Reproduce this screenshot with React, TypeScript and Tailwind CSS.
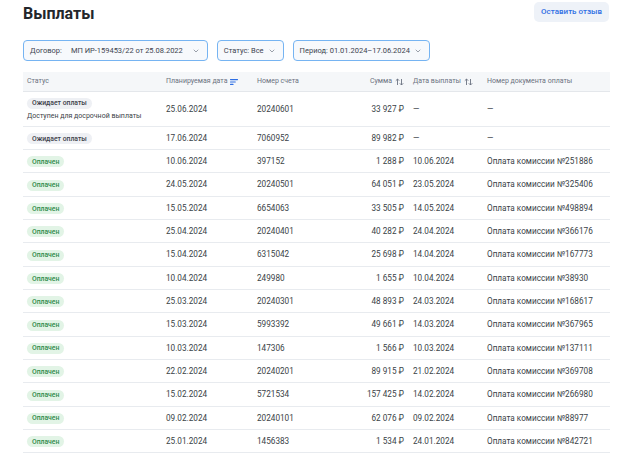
import { ChevronDown } from "lucide-react";

type Row = {
  status: "wait" | "paid";
  early?: boolean;
  plan: string;
  account: string;
  sum: string;
  paid: string;
  doc: string;
};

const rows: Row[] = [
  { status: "wait", early: true, plan: "25.06.2024", account: "20240601", sum: "33 927 ₽", paid: "—", doc: "—" },
  { status: "wait", plan: "17.06.2024", account: "7060952", sum: "89 982 ₽", paid: "—", doc: "—" },
  { status: "paid", plan: "10.06.2024", account: "397152", sum: "1 288 ₽", paid: "10.06.2024", doc: "Оплата комиссии №251886" },
  { status: "paid", plan: "24.05.2024", account: "20240501", sum: "64 051 ₽", paid: "23.05.2024", doc: "Оплата комиссии №325406" },
  { status: "paid", plan: "15.05.2024", account: "6654063", sum: "33 505 ₽", paid: "14.05.2024", doc: "Оплата комиссии №498894" },
  { status: "paid", plan: "25.04.2024", account: "20240401", sum: "40 282 ₽", paid: "24.04.2024", doc: "Оплата комиссии №366176" },
  { status: "paid", plan: "15.04.2024", account: "6315042", sum: "25 698 ₽", paid: "14.04.2024", doc: "Оплата комиссии №167773" },
  { status: "paid", plan: "10.04.2024", account: "249980", sum: "1 655 ₽", paid: "10.04.2024", doc: "Оплата комиссии №38930" },
  { status: "paid", plan: "25.03.2024", account: "20240301", sum: "48 893 ₽", paid: "24.03.2024", doc: "Оплата комиссии №168617" },
  { status: "paid", plan: "15.03.2024", account: "5993392", sum: "49 661 ₽", paid: "14.03.2024", doc: "Оплата комиссии №367965" },
  { status: "paid", plan: "10.03.2024", account: "147306", sum: "1 566 ₽", paid: "10.03.2024", doc: "Оплата комиссии №137111" },
  { status: "paid", plan: "22.02.2024", account: "20240201", sum: "89 915 ₽", paid: "21.02.2024", doc: "Оплата комиссии №369708" },
  { status: "paid", plan: "15.02.2024", account: "5721534", sum: "157 425 ₽", paid: "14.02.2024", doc: "Оплата комиссии №266980" },
  { status: "paid", plan: "09.02.2024", account: "20240101", sum: "62 076 ₽", paid: "09.02.2024", doc: "Оплата комиссии №88977" },
  { status: "paid", plan: "25.01.2024", account: "1456383", sum: "1 534 ₽", paid: "24.01.2024", doc: "Оплата комиссии №842721" },
];

const cols = "grid grid-cols-[139px_91px_87px_68px_75px_1fr] items-center";

function SortArrows() {
  return (
    <svg width="9" height="8" viewBox="0 0 9 8" className="ml-[3px] inline-block">
      <path d="M2.5 7V1M0.8 2.7L2.5 1L4.2 2.7" stroke="#6b7280" strokeWidth="0.9" fill="none" />
      <path d="M6.5 1V7M4.8 5.3L6.5 7L8.2 5.3" stroke="#6b7280" strokeWidth="0.9" fill="none" />
    </svg>
  );
}

function SortActive() {
  return (
    <svg width="8" height="8" viewBox="0 0 9 8" className="ml-[3px] inline-block">
      <rect x="0" y="0.5" width="9" height="1.4" rx="0.5" fill="#2f6fe4" />
      <rect x="0" y="3.3" width="6.5" height="1.4" rx="0.5" fill="#2f6fe4" />
      <rect x="0" y="6.1" width="4" height="1.4" rx="0.5" fill="#2f6fe4" />
    </svg>
  );
}

function Badge({ status }: { status: Row["status"] }) {
  if (status === "wait") {
    return (
      <span className="inline-flex h-[11px] items-center rounded-full bg-[#eef0f4] px-[5px] text-[6.8px] font-medium text-[#3c4048]">
        Ожидает оплаты
      </span>
    );
  }
  return (
    <span className="inline-flex h-[11px] items-center rounded-full bg-[#e2f4e6] px-[5px] text-[6.8px] font-medium text-[#2f8a48]">
      Оплачен
    </span>
  );
}

function Select({ children }: { children: React.ReactNode }) {
  return (
    <div className="flex h-[21px] items-center gap-[4px] rounded-[4px] border border-[#76b4f2] bg-[#f7f9fc] pl-[6px] pr-[7px] text-[7.5px] text-[#3d4450]">
      {children}
    </div>
  );
}

export default function App() {
  return (
    <div className="h-[456px] w-[622px] overflow-hidden bg-white font-['Roboto',sans-serif] text-[#2b2f36]">
      <div className="flex h-[26px] items-start justify-between pl-[23px] pr-[13px] pt-[2px]">
        <h1 className="mt-[1px] text-[16px] font-bold leading-[22px] text-[#23262b]">Выплаты</h1>
        <button
          type="button"
          className="h-[20px] rounded-[5px] bg-[#eef2f8] px-[7px] text-[8px] font-medium text-[#2f6fe4]"
        >
          Оставить отзыв
        </button>
      </div>

      <div className="mt-[14px] flex gap-[9px] pl-[23px]">
        <Select>
          <span>Договор:</span>
          <span className="ml-[5px]">МП ИР-159453/22 от 25.08.2022</span>
          <ChevronDown className="ml-[5px] h-[8px] w-[8px] text-[#6b7280]" strokeWidth={2} />
        </Select>
        <Select>
          <span>Статус: Все</span>
          <ChevronDown className="h-[8px] w-[8px] text-[#6b7280]" strokeWidth={2} />
        </Select>
        <Select>
          <span>Период: 01.01.2024–17.06.2024</span>
          <ChevronDown className="h-[8px] w-[8px] text-[#6b7280]" strokeWidth={2} />
        </Select>
      </div>

      <div className="ml-[23px] mt-[11px] w-[587px]">
        <div className={`${cols} h-[20px] border-b border-[#e4e7eb] bg-[#f5f7f9] text-[7px] text-[#6b7280]`}>
          <div className="pl-[4px]">Статус</div>
          <div className="flex items-center pl-[4px]">
            Планируемая дата
            <SortActive />
          </div>
          <div className="pl-[4px]">Номер счета</div>
          <div className="flex items-center justify-end pr-[4px]">
            Сумма
            <SortArrows />
          </div>
          <div className="flex items-center pl-[5px]">
            Дата выплаты
            <SortArrows />
          </div>
          <div className="pl-[4px]">Номер документа оплаты</div>
        </div>
        {rows.map((r, i) => (
          <div
            key={i}
            className={`${cols} border-b border-[#e8ebef] text-[8.2px] text-[#3a3f47] ${
              r.early ? "h-[35px]" : i === 1 ? "h-[23px]" : "h-[23.33px]"
            }`}
          >
            <div className="pl-[4px]">
              <Badge status={r.status} />
              {r.early && (
                <div className="mt-[2px] text-[7px] text-[#3a3f47]">Доступен для досрочной выплаты</div>
              )}
            </div>
            <div className="pl-[4px]">{r.plan}</div>
            <div className="pl-[4px]">{r.account}</div>
            <div className="pr-[4px] text-right">{r.sum}</div>
            <div className="pl-[5px]">{r.paid}</div>
            <div className="pl-[4px]">{r.doc}</div>
          </div>
        ))}
      </div>
    </div>
  );
}
